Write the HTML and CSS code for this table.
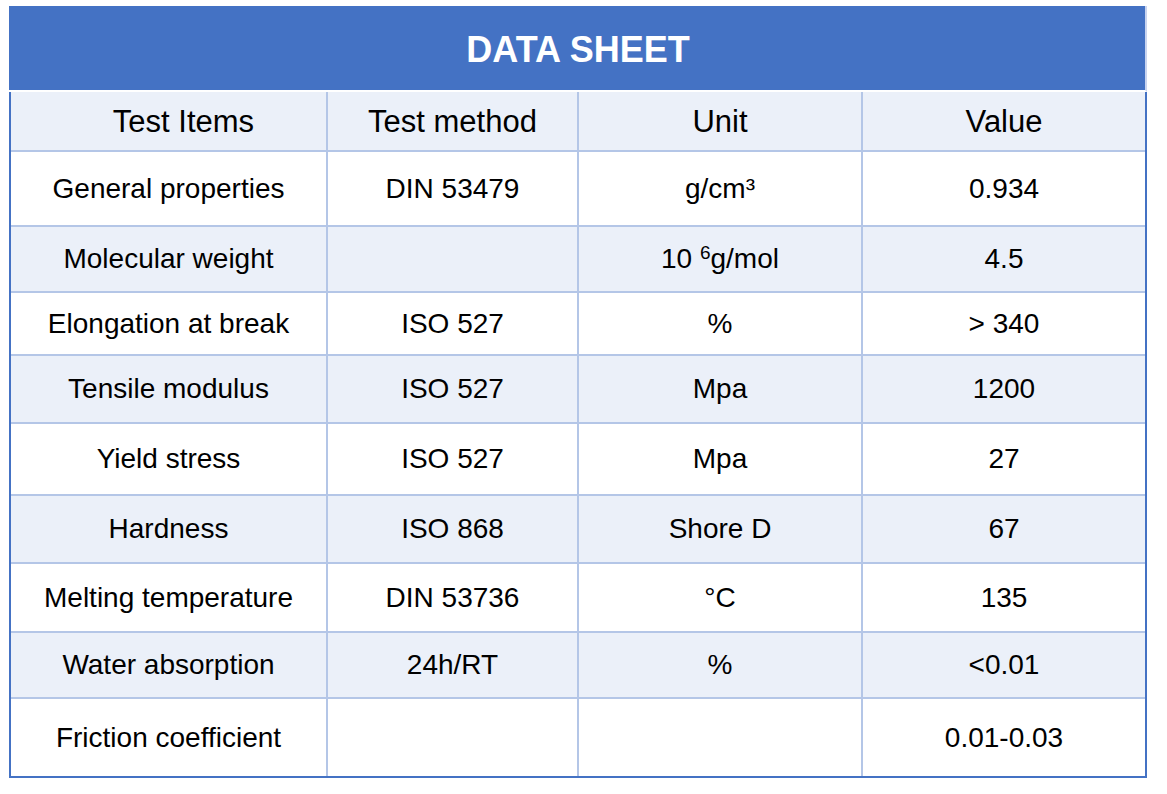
FILE: index.html
```html
<!DOCTYPE html>
<html lang="en">
<head>
<meta charset="utf-8">
<title>Data Sheet</title>
<link rel="stylesheet" href="styles.css">
</head>
<body>
<div class="sheet">
  <div class="title">DATA SHEET</div>
  <div class="grid">
    <div class="cell head first">Test Items</div>
    <div class="cell head">Test method</div>
    <div class="cell head">Unit</div>
    <div class="cell head">Value</div>

    <div class="cell r1">General properties</div>
    <div class="cell r1">DIN 53479</div>
    <div class="cell r1">g/cm³</div>
    <div class="cell r1">0.934</div>

    <div class="cell r2 alt">Molecular weight</div>
    <div class="cell r2 alt"></div>
    <div class="cell r2 alt"><span>10&nbsp;<sup class="sup">6</sup>g/mol</span></div>
    <div class="cell r2 alt">4.5</div>

    <div class="cell r3">Elongation at break</div>
    <div class="cell r3">ISO 527</div>
    <div class="cell r3">%</div>
    <div class="cell r3">&gt; 340</div>

    <div class="cell r4 alt">Tensile modulus</div>
    <div class="cell r4 alt">ISO 527</div>
    <div class="cell r4 alt">Mpa</div>
    <div class="cell r4 alt">1200</div>

    <div class="cell r5">Yield stress</div>
    <div class="cell r5">ISO 527</div>
    <div class="cell r5">Mpa</div>
    <div class="cell r5">27</div>

    <div class="cell r6 alt">Hardness</div>
    <div class="cell r6 alt">ISO 868</div>
    <div class="cell r6 alt">Shore D</div>
    <div class="cell r6 alt">67</div>

    <div class="cell r7">Melting temperature</div>
    <div class="cell r7">DIN 53736</div>
    <div class="cell r7">°C</div>
    <div class="cell r7">135</div>

    <div class="cell r8 alt">Water absorption</div>
    <div class="cell r8 alt">24h/RT</div>
    <div class="cell r8 alt">%</div>
    <div class="cell r8 alt">&lt;0.01</div>

    <div class="cell r9">Friction coefficient</div>
    <div class="cell r9"></div>
    <div class="cell r9"></div>
    <div class="cell r9">0.01-0.03</div>
  </div>
</div>
</body>
</html>
```

FILE: styles.css
```css
html, body {
  margin: 0;
  padding: 0;
  background: #ffffff;
}

body {
  font-family: "Liberation Sans", Arial, sans-serif;
  color: #000000;
}

.sheet {
  padding: 6px 0 0 9px;
  width: 1138px;
}

.title {
  box-sizing: border-box;
  height: 86px;
  background: #4472c4;
  color: #ffffff;
  font-weight: bold;
  font-size: 36px;
  display: flex;
  align-items: center;
  justify-content: center;
  border-bottom: 2px solid #ffffff;
  border-right: 2px solid #c9d4ef;
  padding: 4px 0 0 2px;
}

.grid {
  display: grid;
  grid-template-columns: 315px 249px 282px 282px;
  grid-template-rows: 58px 73px 64px 61px 66px 70px 66px 67px 64px 77px;
  gap: 2px;
  background: #b4c6e7;
  border: 2px solid #4472c4;
  border-top: none;
}

.cell {
  background: #ffffff;
  display: flex;
  align-items: center;
  justify-content: center;
  font-size: 28px;
  white-space: nowrap;
}

.cell.alt,
.cell.head {
  background: #ebf0f9;
}

.cell.head {
  font-size: 31px;
  padding-top: 2px;
}

.cell.head.first {
  padding-left: 30px;
}

.sup {
  font-size: 19px;
  vertical-align: 0;
  position: relative;
  top: -9px;
}
```
